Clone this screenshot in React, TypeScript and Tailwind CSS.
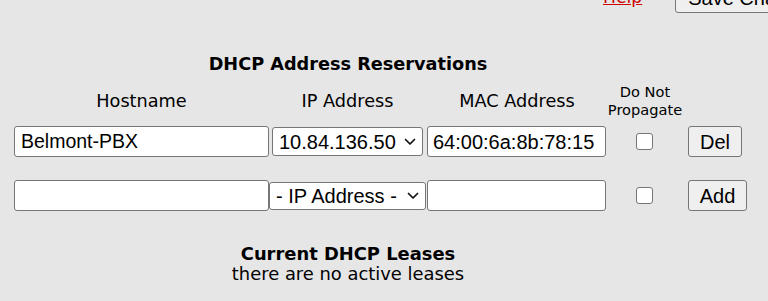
import React from "react";

const Chevron = () => (
  <svg width="12" height="8" viewBox="0 0 12 8" className="shrink-0">
    <polyline points="1.5,1.5 6,6 10.5,1.5" fill="none" stroke="#111" strokeWidth="1.7" strokeLinecap="round" strokeLinejoin="round" />
  </svg>
);

export default function App() {
  return (
    <div className="w-[768px] h-[301px] overflow-hidden bg-[#e6e6e6] text-black font-['DejaVu_Sans',Verdana,sans-serif]">
      {/* top bar */}
      <div className="flex items-center h-[31px] mt-[-18px] pl-[603px] gap-[33px]">
        <a className="text-[17.2px] leading-[21px] text-[#cc0000] underline shrink-0">Help</a>
        <button className="shrink-0 h-[31px] whitespace-nowrap rounded-[3px] border border-[#767676] bg-[#efefef] px-[12px] font-['Liberation_Sans',Arial,sans-serif] text-[20px] leading-none">
          Save Changes
        </button>
      </div>

      {/* title */}
      <div className="w-[696px] mt-[41px] text-center font-bold text-[17.7px] leading-[21px]">
        DHCP Address Reservations
      </div>

      {/* header row */}
      <div className="flex items-center mt-[8px] h-[36px] pl-[14px] text-[17.7px] leading-[21px]">
        <div className="w-[255px] text-center">Hostname</div>
        <div className="w-[157px] text-center">IP Address</div>
        <div className="w-[181px] text-center pl-[1px]">MAC Address</div>
        <div className="w-[76px] text-center text-[14.6px] leading-[18px]">
          Do Not
          <br />
          Propagate
        </div>
      </div>

      {/* row 1 */}
      <div className="flex items-center mt-[7px] h-[31px] pl-[14px] font-['Liberation_Sans',Arial,sans-serif]">
        <div className="w-[255px] h-[31px] flex items-center rounded-[3px] border border-[#767676] bg-white pl-[6px] text-[19.5px]">
          Belmont-PBX
        </div>
        <div className="w-[157px] flex justify-center">
          <div className="w-[151px] h-[29px] flex items-center justify-between rounded-[3px] border border-[#767676] bg-white pl-[6px] pr-[6px] text-[20px]">
            <span>10.84.136.50</span>
            <Chevron />
          </div>
        </div>
        <div className="ml-[1px] w-[179px] h-[31px] flex items-center rounded-[3px] border border-[#767676] bg-white pl-[5px] text-[20px]">
          64:00:6a:8b:78:15
        </div>
        <div className="w-[76px] flex justify-center">
          <div className="w-[17px] h-[17px] rounded-[3px] border border-[#767676] bg-white" />
        </div>
        <button className="ml-[6px] w-[54px] h-[31px] rounded-[3px] border border-[#767676] bg-[#efefef] text-[20px] leading-none">
          Del
        </button>
      </div>

      {/* row 2 */}
      <div className="flex items-center mt-[23px] h-[31px] pl-[14px] font-['Liberation_Sans',Arial,sans-serif]">
        <div className="w-[255px] h-[31px] rounded-[3px] border border-[#767676] bg-white" />
        <div className="w-[157px] flex justify-center">
          <div className="w-[157px] h-[28px] mt-[1px] flex items-center justify-between rounded-[3px] border border-[#767676] bg-white pl-[6px] pr-[6px] text-[20px]">
            <span>- IP Address -</span>
            <Chevron />
          </div>
        </div>
        <div className="ml-[1px] w-[179px] h-[31px] rounded-[3px] border border-[#767676] bg-white" />
        <div className="w-[76px] flex justify-center">
          <div className="w-[17px] h-[17px] rounded-[3px] border border-[#767676] bg-white" />
        </div>
        <button className="ml-[6px] w-[59px] h-[31px] rounded-[3px] border border-[#767676] bg-[#efefef] text-[20px] leading-none">
          Add
        </button>
      </div>

      {/* leases */}
      <div className="w-[696px] mt-[33px] text-center text-[17.9px] leading-[20px]">
        <div className="font-bold">Current DHCP Leases</div>
        <div>there are no active leases</div>
      </div>
    </div>
  );
}
